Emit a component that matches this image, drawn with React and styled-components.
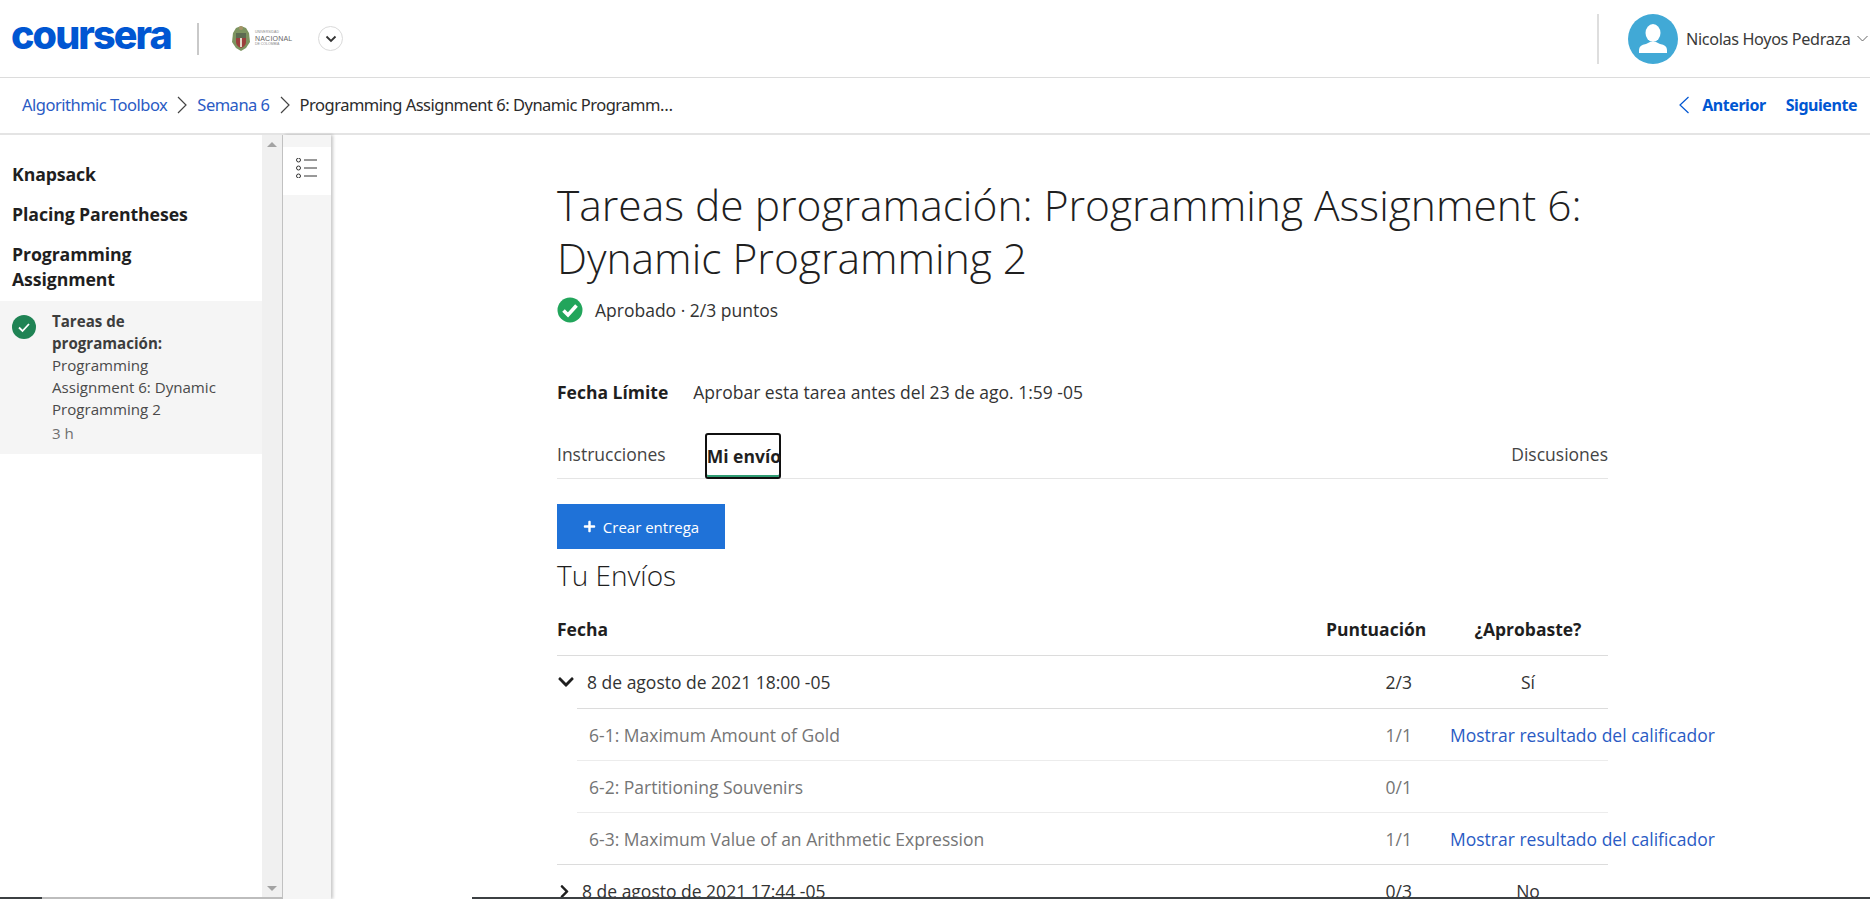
import React from 'react';
import styled, { createGlobalStyle } from 'styled-components';
import { FaChevronDown, FaChevronRight, FaPlus } from 'react-icons/fa';

const BLUE = '#0056d2';
const LINK = '#2a5bc4';

const GlobalStyle = createGlobalStyle`
  html, body {
    margin: 0;
    padding: 0;
    height: 100%;
    overflow: hidden;
    background: #fff;
    font-family: "Open Sans", sans-serif;
    color: #1f1f1f;
  }
  * { box-sizing: border-box; }
`;

const Page = styled.div`
  width: 1870px;
  height: 899px;
  display: flex;
  flex-direction: column;
  overflow: hidden;
  position: relative;
`;

const TopBar = styled.header`
  height: 78px;
  flex: none;
  display: flex;
  align-items: center;
  border-bottom: 1px solid #dcdcdc;
`;

const Wordmark = styled.span`
  margin-left: 11px;
  width: 162px;
  font-family: Inter, sans-serif;
  font-weight: 800;
  font-size: 39.5px;
  letter-spacing: -1.9px;
  line-height: 1;
  color: ${BLUE};
  position: relative;
  top: -3px;
`;

const VRule = styled.span`
  width: 2px;
  height: 32px;
  background: #c9c9c9;
  margin-left: 24px;
`;

const Crest = styled.div`
  margin-left: 33px;
  display: flex;
  align-items: center;
  gap: 5px;
`;

const CrestText = styled.div`
  width: 38px;
  display: flex;
  flex-direction: column;
  align-items: flex-start;
  font-family: "Liberation Sans", sans-serif;
  color: #8a8a8a;
  font-size: 3.5px;
  line-height: 5px;
  white-space: nowrap;

  strong {
    font-size: 7px;
    line-height: 7px;
    font-weight: 400;
    letter-spacing: 0.2px;
    color: #666;
  }
`;

const RoundToggle = styled.span`
  width: 25px;
  height: 25px;
  margin-left: 25px;
  border-radius: 50%;
  border: 1px solid #dadada;
  display: flex;
  align-items: center;
  justify-content: center;
`;

const UserBox = styled.div`
  margin-left: auto;
  height: 100%;
  display: flex;
  align-items: center;
  white-space: nowrap;
`;

const UserRule = styled.span`
  width: 2px;
  height: 50px;
  background: #dedede;
  margin-right: 30px;
`;

const Avatar = styled.span`
  width: 50px;
  height: 50px;
  margin-left: -1px;
  border-radius: 50%;
  background: #41a9d6;
  display: block;
  overflow: hidden;
  flex: none;
`;

const UserName = styled.span`
  margin-left: 8px;
  font-family: "Noto Sans", sans-serif;
  font-size: 16.2px;
  letter-spacing: -0.35px;
  color: #3a3a3a;
  width: 171px;
`;

const Crumbs = styled.nav`
  height: 57px;
  flex: none;
  display: flex;
  align-items: center;
  padding: 0 13px 2px 22px;
  border-bottom: 2px solid #e4e4e4;
  font-family: "Noto Sans", sans-serif;
  font-size: 16.5px;
  letter-spacing: -0.5px;
  white-space: nowrap;
`;

const CrumbLink = styled.a`
  color: ${LINK};
`;

const CrumbSep = styled.svg`
  width: 14px;
  height: 18px;
  margin: 0 8px 0 8px;
  flex: none;
`;

const CrumbCurrent = styled.span`
  color: #2b2b2b;
`;

const Pager = styled.div`
  margin-left: auto;
  display: flex;
  align-items: center;
  font-size: 16px;
  font-weight: 700;
  color: ${BLUE};
  letter-spacing: -0.45px;
  gap: 20px;
`;

const PagerBack = styled.span`
  display: flex;
  align-items: center;
  gap: 12px;
`;

const Body = styled.div`
  flex: 1;
  min-height: 0;
  display: flex;
`;

const Sidebar = styled.aside`
  width: 262px;
  flex: none;
  padding-top: 27px;
  border-bottom: 2px solid #bdbdbd;
`;

const LessonHead = styled.h3`
  margin: 0 30px 15px 0;
  padding: 0 0 0 12px;
  font-size: 17.7px;
  line-height: 25px;
  font-weight: 700;
  color: #1f1f1f;
  letter-spacing: -0.1px;
`;

const ActiveItem = styled.div`
  background: #f5f5f5;
  margin-top: -6px;
  height: 153px;
  padding: 9px 42px 0 12px;
  display: flex;
  gap: 16px;
`;

const ItemIcon = styled.span`
  flex: none;
  width: 24px;
  height: 24px;
  margin-top: 5px;
  border-radius: 50%;
  background: #1f8354;
  display: flex;
  align-items: center;
  justify-content: center;
`;

const ItemText = styled.div`
  font-size: 15.1px;
  line-height: 22px;
  color: #4a4a4a;

  strong {
    font-weight: 700;
    color: #3d3d3d;
    display: block;
  }
`;

const ItemTime = styled.div`
  color: #6f6f6f;
  margin-top: 2px;
`;

const ScrollTrack = styled.div`
  width: 21px;
  flex: none;
  background: #f0f0f0;
  border-right: 1px solid #c4c4c4;
  border-bottom: 2px solid #bdbdbd;
  display: flex;
  flex-direction: column;
  justify-content: space-between;
  align-items: center;
  padding: 7px 0 6px;
`;

const ScrollArrow = styled.span`
  width: 0;
  height: 0;
  border-left: 5px solid transparent;
  border-right: 5px solid transparent;
  ${(p) => (p.$down
    ? 'border-top: 5px solid #a3a3a3;'
    : 'border-bottom: 5px solid #a3a3a3;')}
`;

const Rail = styled.div`
  width: 48px;
  flex: none;
  background: #f5f5f5;
  padding-top: 12px;
  box-shadow: 2px 0 3px rgba(0, 0, 0, 0.22);
`;

const RailTile = styled.div`
  height: 48px;
  background: #fff;
  display: flex;
  justify-content: center;
  padding-top: 11px;
`;

const Main = styled.main`
  flex: 1;
  min-width: 0;
  padding: 44px 0 0 226px;
`;

const Column = styled.div`
  width: 1051px;
`;

const Title = styled.h1`
  margin: 0;
  font-size: 42.5px;
  line-height: 52.5px;
  font-weight: 300;
  color: #1f1f1f;
`;

const Status = styled.div`
  display: flex;
  align-items: center;
  gap: 12px;
  margin-top: 13px;
  font-size: 17.5px;
  line-height: 24px;
  color: #333;
`;

const Deadline = styled.div`
  display: flex;
  gap: 25px;
  margin-top: 57px;
  font-size: 17.5px;
  line-height: 24px;
  color: #333;

  strong {
    font-weight: 700;
    color: #1f1f1f;
  }
`;

const Tabs = styled.div`
  display: flex;
  justify-content: space-between;
  align-items: flex-end;
  margin-top: 29px;
  height: 46px;
  border-bottom: 1px solid #e5e5e5;
  font-size: 17.5px;
  color: #444;
`;

const TabLeft = styled.div`
  display: flex;
  align-items: flex-end;
  gap: 40px;
  height: 100%;
`;

const Tab = styled.span`
  height: 46px;
  line-height: 44px;
  ${(p) => p.$active && `
    width: 76px;
    margin-left: -1px;
    margin-bottom: -1px;
    height: 46px;
    line-height: 42px;
    border: 2px solid #101010;
    border-radius: 3px;
    box-shadow: inset 0 -2px 0 #2f9c73;
    font-weight: 700;
    color: #1f1f1f;
    white-space: nowrap;
  `}
`;

const CreateButton = styled.button`
  margin-top: 25px;
  width: 168px;
  height: 45px;
  display: flex;
  align-items: center;
  justify-content: center;
  gap: 7px;
  border: 0;
  background: #1f72d8;
  color: #fff;
  font-family: "Open Sans", sans-serif;
  font-size: 15px;
`;

const SectionTitle = styled.h2`
  margin: 6px 0 0;
  font-size: 28px;
  line-height: 40px;
  font-weight: 300;
  color: #1f1f1f;
`;

const Table = styled.div`
  margin-top: 8px;
`;

const Row = styled.div`
  display: grid;
  grid-template-columns: 1fr 122px 160px;
  align-items: center;
  height: ${(p) => p.$h || 52}px;
  font-size: 17.5px;
  color: #333;
  ${(p) => p.$line && 'border-bottom: 1px solid #dcdcdc;'}
`;

const SubGroup = styled.div`
  border-bottom: 1px solid #dcdcdc;
`;

const SubRow = styled(Row)`
  margin-left: 20px;
  color: #757575;
  border-top: 1px solid ${(p) => (p.$first ? '#dcdcdc' : '#ececec')};
`;

const HeadCell = styled.span`
  font-weight: 700;
  color: #1f1f1f;
  white-space: nowrap;
  text-align: ${(p) => p.$align || 'left'};
  padding-right: ${(p) => p.$pad || 0}px;
`;

const NameCell = styled.span`
  display: flex;
  align-items: center;
  gap: ${(p) => p.$gap || 0}px;
  padding-left: ${(p) => p.$pad || 0}px;
  white-space: nowrap;
`;

const ScoreCell = styled.span`
  text-align: right;
  padding-right: 36px;
`;

const PassCell = styled.span`
  text-align: center;
  white-space: nowrap;
`;

const GraderLink = styled.a`
  color: ${LINK};
  white-space: nowrap;
  margin-left: 2px;
`;

const BottomEdge = styled.div`
  position: absolute;
  bottom: 0;
  height: 2px;
  background: #3c4043;
  left: ${(p) => p.$left}px;
  width: ${(p) => p.$width}px;
`;

const parts = [
  { name: '6-1: Maximum Amount of Gold', score: '1/1', link: true },
  { name: '6-2: Partitioning Souvenirs', score: '0/1', link: false },
  { name: '6-3: Maximum Value of an Arithmetic Expression', score: '1/1', link: true },
];

function Chevron({ color }) {
  return (
    <CrumbSep viewBox="0 0 14 18">
      <path d="M3 1 L11 9 L3 17" fill="none" stroke={color} strokeWidth="1.2" />
    </CrumbSep>
  );
}

function App() {
  return (
    <Page>
      <GlobalStyle />
      <TopBar>
        <Wordmark>coursera</Wordmark>
        <VRule />
        <Crest>
          <svg width="18" height="27" viewBox="0 0 18 27">
            <path d="M9 1 L14 3 L17 8 L18 17 L14 23 L9 26 L4 23 L0 17 L1 8 L4 3 Z" fill="#7d9460" />
            <path d="M4 8 H14 V17 Q14 21 9 23 Q4 21 4 17 Z" fill="#9b3f3c" />
            <rect x="4" y="8" width="10" height="5" fill="#5c6b50" />
            <rect x="8" y="13" width="2" height="9" fill="#e0dac8" />
            <circle cx="9" cy="3" r="2" fill="#a89468" />
          </svg>
          <CrestText>
            <span>UNIVERSIDAD</span>
            <strong>NACIONAL</strong>
            <span>DE COLOMBIA</span>
          </CrestText>
        </Crest>
        <RoundToggle>
          <svg width="12" height="8" viewBox="0 0 12 8">
            <path d="M1.5 1.5 L6 6 L10.5 1.5" fill="none" stroke="#333" strokeWidth="1.8" />
          </svg>
        </RoundToggle>
        <UserBox>
          <UserRule />
          <Avatar>
            <svg width="50" height="50" viewBox="0 0 50 50">
              <ellipse cx="25" cy="19" rx="7.5" ry="9" fill="#fff" />
              <path d="M11 39 V36 Q11 31 18 30 L22 28 H28 L32 30 Q39 31 39 36 V39 Z" fill="#fff" />
            </svg>
          </Avatar>
          <UserName>Nicolas Hoyos Pedraza</UserName>
          <svg width="11" height="7" viewBox="0 0 11 7" style={{ marginRight: 2 }}>
            <path d="M0.5 1 L5.5 6 L10.5 1" fill="none" stroke="#666" strokeWidth="1" />
          </svg>
        </UserBox>
      </TopBar>
      <Crumbs>
        <CrumbLink>Algorithmic Toolbox</CrumbLink>
        <Chevron color="#444" />
        <CrumbLink>Semana 6</CrumbLink>
        <Chevron color="#444" />
        <CrumbCurrent>Programming Assignment 6: Dynamic Programm…</CrumbCurrent>
        <Pager>
          <PagerBack>
            <svg width="12" height="18" viewBox="0 0 12 18">
              <path d="M10.5 1 L2 9 L10.5 17" fill="none" stroke={BLUE} strokeWidth="1.2" />
            </svg>
            Anterior
          </PagerBack>
          <span>Siguiente</span>
        </Pager>
      </Crumbs>
      <Body>
        <Sidebar>
          <LessonHead>Knapsack</LessonHead>
          <LessonHead>Placing Parentheses</LessonHead>
          <LessonHead>Programming Assignment</LessonHead>
          <ActiveItem>
            <ItemIcon>
              <svg width="14" height="11" viewBox="0 0 14 11">
                <path d="M2 5.5 L5.5 9 L12 2" fill="none" stroke="#fff" strokeWidth="1.8" />
              </svg>
            </ItemIcon>
            <ItemText>
              <strong>Tareas de programación:</strong>
              Programming Assignment 6: Dynamic Programming 2
              <ItemTime>3 h</ItemTime>
            </ItemText>
          </ActiveItem>
        </Sidebar>
        <ScrollTrack>
          <ScrollArrow />
          <ScrollArrow $down />
        </ScrollTrack>
        <Rail>
          <RailTile>
            <svg width="22" height="20" viewBox="0 0 22 20">
              <g fill="none" stroke="#333" strokeWidth="1">
                <circle cx="2.5" cy="2" r="2" />
                <circle cx="2.5" cy="10" r="2" />
                <circle cx="2.5" cy="18" r="2" />
                <path d="M8 2 H21 M8 10 H21 M8 18 H21" />
              </g>
            </svg>
          </RailTile>
        </Rail>
        <Main>
          <Column>
            <Title>Tareas de programación: Programming Assignment 6: Dynamic Programming 2</Title>
            <Status>
              <svg width="26" height="26" viewBox="0 0 26 26">
                <circle cx="13" cy="13" r="12.5" fill="#22a55b" />
                <path d="M6.5 13.5 L11 18 L19.5 8.5" fill="none" stroke="#fff" strokeWidth="3.6" />
              </svg>
              Aprobado · 2/3 puntos
            </Status>
            <Deadline>
              <strong>Fecha Límite</strong>
              Aprobar esta tarea antes del 23 de ago. 1:59 -05
            </Deadline>
            <Tabs>
              <TabLeft>
                <Tab>Instrucciones</Tab>
                <Tab $active>Mi envío</Tab>
              </TabLeft>
              <Tab>Discusiones</Tab>
            </Tabs>
            <CreateButton>
              <FaPlus size={13} />
              Crear entrega
            </CreateButton>
            <SectionTitle>Tu Envíos</SectionTitle>
            <Table>
              <Row $h={53} $line>
                <HeadCell>Fecha</HeadCell>
                <HeadCell $align="right" $pad={23}>Puntuación</HeadCell>
                <HeadCell $align="center">¿Aprobaste?</HeadCell>
              </Row>
              <Row>
                <NameCell $gap={12}>
                  <FaChevronDown size={18} color="#1f1f1f" />
                  8 de agosto de 2021 18:00 -05
                </NameCell>
                <ScoreCell>2/3</ScoreCell>
                <PassCell>Sí</PassCell>
              </Row>
              <SubGroup>
                {parts.map((part, i) => (
                  <SubRow $first={i === 0} key={part.name}>
                    <NameCell $pad={12}>{part.name}</NameCell>
                    <ScoreCell>{part.score}</ScoreCell>
                    {part.link ? <GraderLink>Mostrar resultado del calificador</GraderLink> : <span />}
                  </SubRow>
                ))}
              </SubGroup>
              <Row>
                <NameCell $gap={10}>
                  <FaChevronRight size={15} color="#1f1f1f" />
                  8 de agosto de 2021 17:44 -05
                </NameCell>
                <ScoreCell>0/3</ScoreCell>
                <PassCell>No</PassCell>
              </Row>
            </Table>
          </Column>
        </Main>
        <BottomEdge $left={0} $width={42} />
        <BottomEdge $left={472} $width={1398} />
      </Body>
    </Page>
  );
}

export default App;
